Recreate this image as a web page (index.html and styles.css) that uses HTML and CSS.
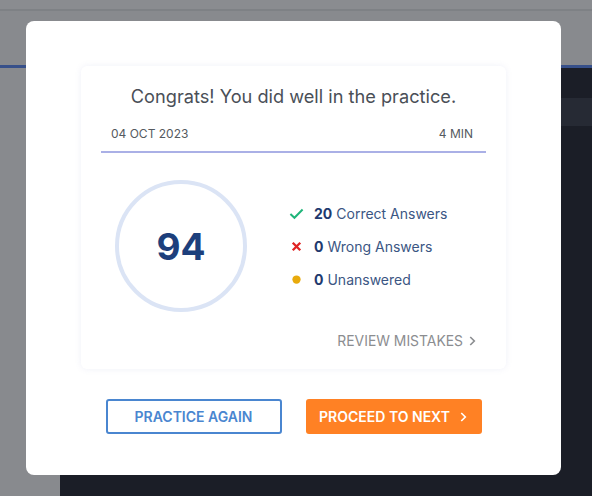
FILE: index.html
```html
<!DOCTYPE html>
<html lang="en">
<head>
  <meta charset="UTF-8">
  <meta name="viewport" content="width=device-width, initial-scale=1.0">
  <title>Practice Result</title>
  <link rel="stylesheet" href="styles.css">
</head>
<body>

<!-- Page behind the overlay -->
<div class="page">
  <div class="topbar"></div>
  <div class="header"></div>
  <div class="main">
    <div class="sidebar"></div>
    <div class="content">
      <div class="content-band"></div>
    </div>
  </div>
</div>

<!-- Result Modal -->
<div class="modal">
  <div class="result-card">
    <h2 class="result-title">Congrats! You did well in the practice.</h2>
    <div class="result-meta">
      <span>04 OCT 2023</span>
      <span>4 MIN</span>
    </div>

    <div class="result-body">
      <div class="score-ring">94</div>
      <ul class="stats">
        <li>
          <svg class="stat-icon" viewBox="0 0 16 16" width="15" height="15">
            <path d="M1.5 8.5 L5.8 12.6 L14.5 3.8" fill="none" stroke="#1fb57a" stroke-width="2.1"/>
          </svg>
          <b>20</b> Correct Answers
        </li>
        <li>
          <svg class="stat-icon" viewBox="0 0 16 16" width="15" height="15">
            <path d="M4 4 L12 12 M12 4 L4 12" fill="none" stroke="#e02424" stroke-width="2.5"/>
          </svg>
          <b>0</b> Wrong Answers
        </li>
        <li>
          <svg class="stat-icon" viewBox="0 0 16 16" width="15" height="15">
            <circle cx="8" cy="8" r="4.4" fill="#e8aa0c"/>
          </svg>
          <b>0</b> Unanswered
        </li>
      </ul>
    </div>

    <div class="review">
      <a href="#" class="review-link">REVIEW MISTAKES
        <svg viewBox="0 0 10 12" width="9" height="12">
          <path d="M2.5 1.5 L7 6 L2.5 10.5" fill="none" stroke="currentColor" stroke-width="1.8"/>
        </svg>
      </a>
    </div>
  </div>

  <div class="actions">
    <button class="btn btn-outline">PRACTICE AGAIN</button>
    <button class="btn btn-primary">PROCEED TO NEXT
      <svg viewBox="0 0 10 12" width="9" height="12">
        <path d="M2.5 1.5 L7 6 L2.5 10.5" fill="none" stroke="currentColor" stroke-width="1.8"/>
      </svg>
    </button>
  </div>
</div>

</body>
</html>
```

FILE: styles.css
```css
body {
  margin: 0;
  font-family: Inter, "Noto Sans", sans-serif;
  background-color: #888a8e;
  overflow: hidden;
}

/* background page (dimmed) */
.page {
  height: 496px;
  display: flex;
  flex-direction: column;
}
.topbar {
  height: 9px;
  background: #8a8c90;
  border-bottom: 2px solid #7e8185;
}
.header {
  height: 54px;
  background: #888a8e;
  border-bottom: 3px solid #37508a;
}
.main {
  flex: 1;
  display: flex;
}
.sidebar {
  width: 60px;
  background: #888a8e;
}
.content {
  flex: 1;
  background: #1b1e27;
  padding-top: 30px;
}
.content-band {
  height: 28px;
  background: #262a34;
}

/* modal */
.modal {
  position: absolute;
  left: 26px;
  top: 21px;
  width: 535px;
  height: 454px;
  box-sizing: border-box;
  background: #fff;
  border-radius: 8px;
  padding: 45px 55px 0;
}
.result-card {
  background: #fff;
  border-radius: 6px;
  box-shadow: 0 0 6px rgba(120, 130, 200, 0.12);
  height: 303px;
  box-sizing: border-box;
  padding: 17px 20px 0;
}
.result-title {
  margin: 0;
  text-align: center;
  font-size: 18.2px;
  font-weight: 400;
  color: #4a4f57;
  line-height: 26px;
}
.result-meta {
  display: flex;
  justify-content: space-between;
  margin-top: 17px;
  padding: 0 13px 0 10px;
  font-size: 12px;
  color: #555a60;
  line-height: 16px;
  padding-bottom: 9px;
  border-bottom: 2px solid #aab0e6;
}
.result-body {
  display: flex;
  align-items: center;
  margin-top: 27px;
  padding-left: 14px;
}
.score-ring {
  width: 132px;
  height: 132px;
  box-sizing: border-box;
  border: 4px solid #dbe4f5;
  border-radius: 50%;
  display: flex;
  align-items: center;
  justify-content: center;
  font-size: 37px;
  font-weight: 700;
  color: #1d3f7c;
}
.stats {
  list-style: none;
  margin: 0 0 0 42px;
  padding: 0;
}
.stats li {
  display: flex;
  align-items: center;
  height: 33px;
  font-size: 14px;
  color: #3b5683;
}
.stats b {
  color: #1e3a6e;
  margin-right: 4px;
}
.stat-icon {
  margin-right: 10px;
}
.review {
  text-align: right;
  margin-top: 18px;
  padding-right: 9px;
}
.review-link {
  text-decoration: none;
  color: #8b8d90;
  font-size: 13.9px;
  display: inline-flex;
  align-items: center;
  gap: 5px;
}

.actions {
  display: flex;
  justify-content: center;
  gap: 24px;
  margin-top: 30px;
}
.btn {
  width: 176px;
  height: 35px;
  box-sizing: border-box;
  border-radius: 3px;
  font-family: Inter, "Noto Sans", sans-serif;
  font-size: 14px;
  font-weight: 600;
  cursor: pointer;
  display: flex;
  align-items: center;
  justify-content: center;
  gap: 9px;
}
.btn-outline {
  background: #fff;
  border: 2px solid #4a86d0;
  color: #4a86d0;
}
.btn-primary {
  background: #ff8124;
  border: none;
  color: #fff;
}
```
